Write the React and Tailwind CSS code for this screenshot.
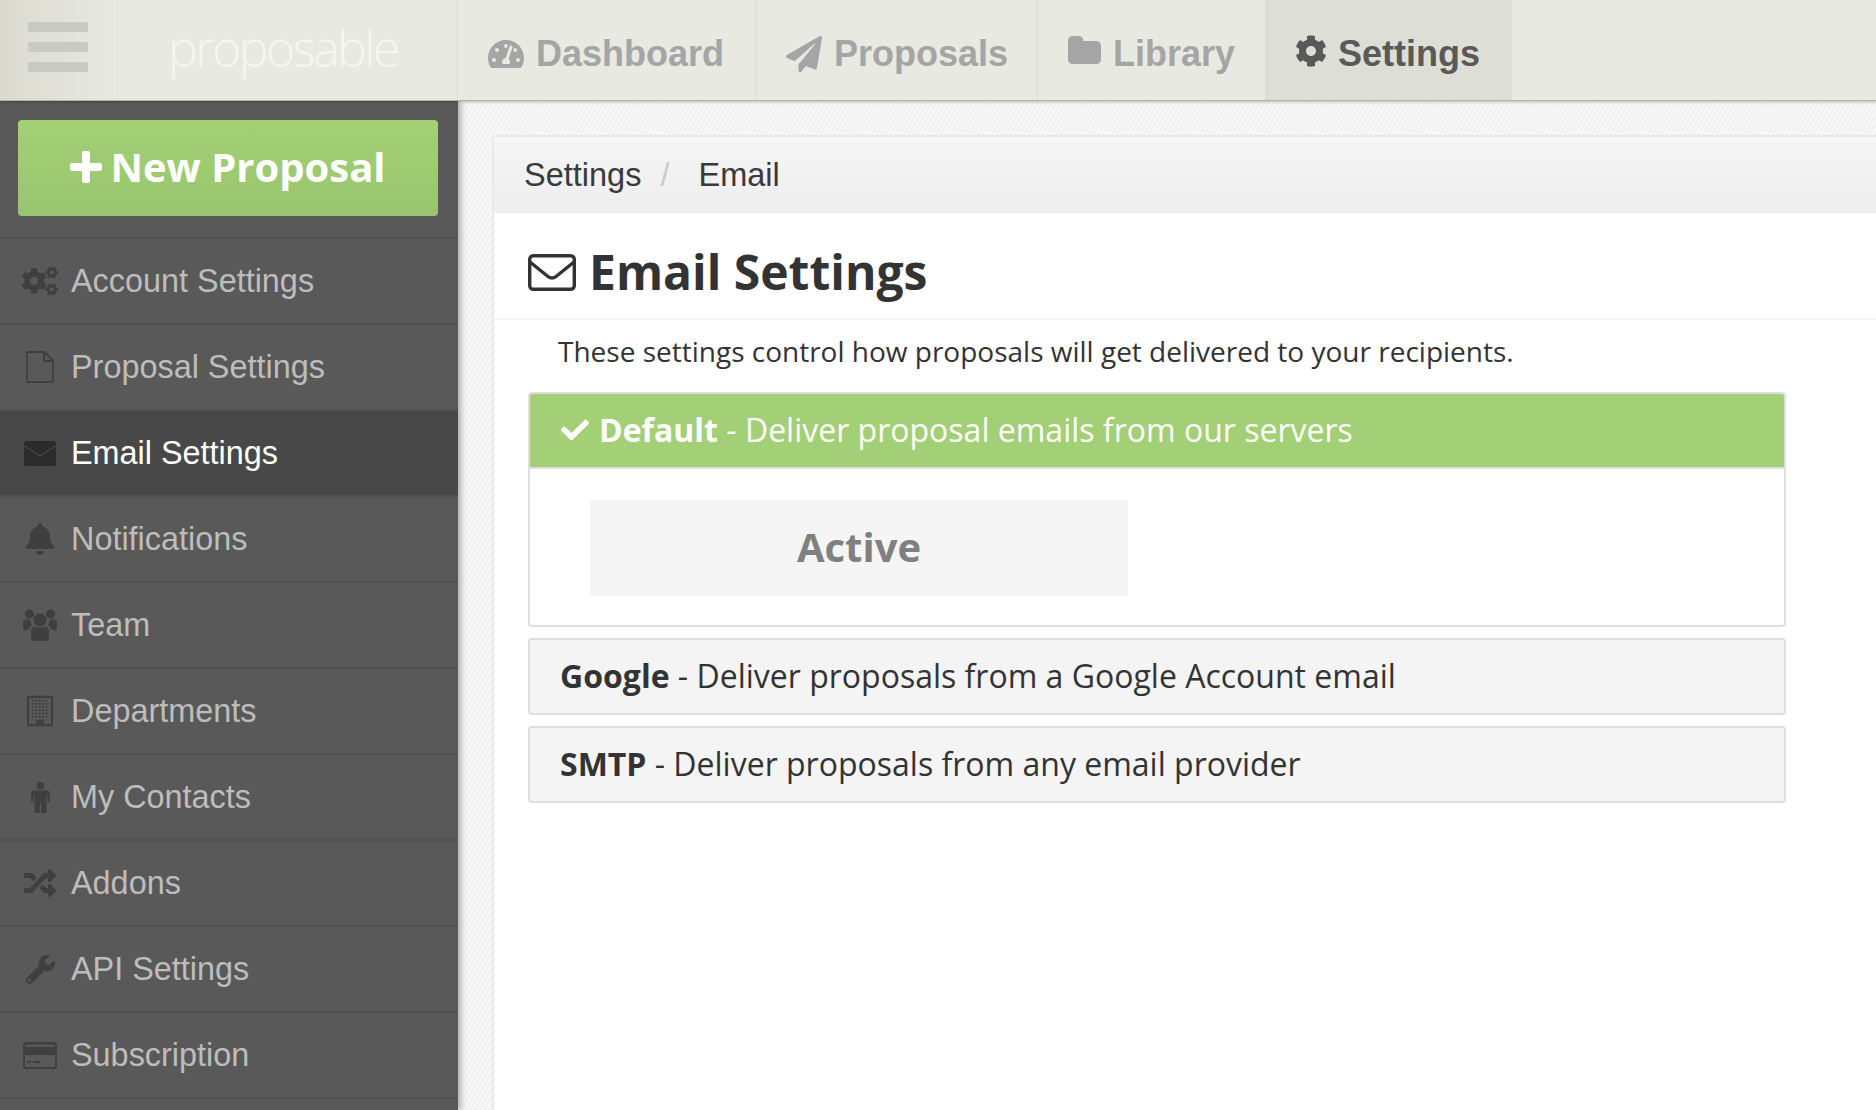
import { FaTachometerAlt, FaPaperPlane, FaCog, FaCogs, FaBell, FaRandom, FaWrench, FaCheck } from 'react-icons/fa'

function BuildingIcon() {
  const dots = []
  for (let r = 0; r < 6; r++) {
    for (let c = 0; c < 5; c++) {
      dots.push(<rect key={`${r}-${c}`} x={4.5 + c * 3.2} y={3.5 + r * 3} width="1.7" height="1.6" />)
    }
  }
  return (
    <svg viewBox="0 0 24 28" className="w-[26px] h-[32px]" fill="currentColor">
      <path fillRule="evenodd" d="M1.5 0h21A1.5 1.5 0 0 1 24 1.5v25a1.5 1.5 0 0 1-1.5 1.5h-21A1.5 1.5 0 0 1 0 26.5v-25A1.5 1.5 0 0 1 1.5 0zM2 2v24h6v-4h8v4h6V2z" />
      {dots}
    </svg>
  )
}

function CardIcon() {
  return (
    <svg viewBox="0 0 34 27" className="w-[34px] h-[27px]" fill="currentColor">
      <path fillRule="evenodd" d="M3 0h28a3 3 0 0 1 3 3v21a3 3 0 0 1-3 3H3a3 3 0 0 1-3-3V3a3 3 0 0 1 3-3zM2 13v11a1 1 0 0 0 1 1h28a1 1 0 0 0 1-1V13zM2 2.5V5h30V2.5z" />
      <rect x="4" y="19" width="4" height="2" />
      <rect x="10" y="19" width="7" height="2" />
    </svg>
  )
}

function FolderIcon() {
  return (
    <svg viewBox="0 0 1664 1408" className="mb-[7px] w-[33px] h-[28px]" fill="currentColor">
      <path d="M1664 480v704q0 92-66 158t-158 66H224q-92 0-158-66t-66-158V224q0-92 66-158t158-66h320q92 0 158 66t66 158v32h672q92 0 158 66t66 158z" />
    </svg>
  )
}

function FileIcon() {
  return (
    <svg viewBox="0 0 28 32" className="w-[28px] h-[32px]" fill="none" stroke="currentColor" strokeWidth="1.8">
      <path d="M1.5 1h17L27 9.5V29.5a1.5 1.5 0 0 1-1.5 1.5h-24A1 1 0 0 1 1 30V2a1 1 0 0 1 .5-1z" />
      <path d="M18 1v9h9" />
    </svg>
  )
}

function MailFilled({ cut }) {
  return (
    <svg viewBox="0 0 32 25" className="w-[32px] h-[25px]">
      <rect width="32" height="25" rx="2.5" fill="currentColor" />
      <path d="M0 4.5 L16 15 L32 4.5" fill="none" stroke={cut} strokeWidth="1.2" />
    </svg>
  )
}

function MailOutline() {
  return (
    <svg viewBox="0 0 48 37" className="ml-[1px] w-[48px] h-[37px]" fill="none" stroke="currentColor" strokeWidth="3.4" strokeLinejoin="round">
      <rect x="1.7" y="1.7" width="44.6" height="33.6" rx="3.5" />
      <path d="M2 8 L20 22.5 Q24 25.5 28 22.5 L46 8" />
    </svg>
  )
}

function PlusIcon() {
  return (
    <svg viewBox="0 0 32 32" className="w-[32px] h-[32px]" fill="currentColor">
      <rect x="12" y="0" width="8" height="32" rx="2" />
      <rect x="0" y="12" width="32" height="8" rx="2" />
    </svg>
  )
}

function TeamIcon() {
  return (
    <svg viewBox="0 0 34 32" className="w-[34px] h-[32px]" fill="currentColor">
      <circle cx="6.5" cy="5" r="4.5" />
      <circle cx="27.5" cy="5" r="4.5" />
      <circle cx="17" cy="11" r="6.5" />
      <path d="M0 13.5q0-2.500 3-3h4q.5 3 2.500 6-3 .5-4.500 4.500H2q-2 0-2-2zM34 13.500q0-2.500-3-3h-4q-.5 3-2.500 6 3 .5 4.500 4.500h3q2 0 2-2z" />
      <path d="M8 23q0-4.500 4-5.500 5 3 10 0 4 1 4 5.500v5.500q0 3.500-3.500 3.500h-11Q8 32 8 28.500z" />
    </svg>
  )
}

function MaleIcon() {
  return (
    <svg viewBox="0 0 19 31" className="w-[19px] h-[31px]" fill="currentColor">
      <circle cx="9.5" cy="3.7" r="3.7" />
      <path d="M3 8.5h13a3 3 0 0 1 3 3v7.500a1.250 1.250 0 0 1-2.500 0v-6.500h-1v17a1.500 1.500 0 0 1-5.500.5v-9h-1v9a1.500 1.500 0 0 1-5.500-.5v-17h-1v6.500a1.250 1.250 0 0 1-2.500 0v-7.500a3 3 0 0 1 3-3z" />
    </svg>
  )
}

const navItems = [
  { label: 'Dashboard', icon: <FaTachometerAlt size={36} />, width: 'w-[298px]' },
  { label: 'Proposals', icon: <FaPaperPlane size={36} />, width: 'w-[282px]' },
  { label: 'Library', icon: <FolderIcon />, width: 'w-[228px]' },
]

const sideItems = [
  { label: 'Account Settings', icon: <FaCogs size={36} /> },
  { label: 'Proposal Settings', icon: <FileIcon /> },
  { label: 'Email Settings', icon: <MailFilled cut="#484848" />, active: true },
  { label: 'Notifications', icon: <FaBell size={32} /> },
  { label: 'Team', icon: <TeamIcon /> },
  { label: 'Departments', icon: <BuildingIcon /> },
  { label: 'My Contacts', icon: <MaleIcon /> },
  { label: 'Addons', icon: <FaRandom size={32} /> },
  { label: 'API Settings', icon: <FaWrench size={29} /> },
  { label: 'Subscription', icon: <CardIcon /> },
]

function TopBar() {
  return (
    <header className="relative z-20 flex h-[101px] shrink-0 border-b border-[#b4b5a6] bg-[#e8e9e1] shadow-[0_1px_3px_rgba(0,0,0,0.25)] font-['Liberation_Sans',sans-serif]">
      <div className="flex w-[118px] flex-col gap-[10px] border-r border-[#dddfd5] bg-gradient-to-r from-[#dadad0] to-[#e8e9e1] py-[22px] pl-[28px]">
        <span className="h-[10px] w-[60px] rounded-[2px] bg-[#c9cac1]" />
        <span className="h-[10px] w-[60px] rounded-[2px] bg-[#c9cac1]" />
        <span className="h-[10px] w-[60px] rounded-[2px] bg-[#c9cac1]" />
      </div>
      <div className="flex w-[340px] items-center border-r border-[#dddfd5] pb-[4px] pl-[50px] font-['Open_Sans',sans-serif] text-[50px] font-light tracking-[-2.6px] text-[#f5f6f0]">
        proposable
      </div>
      {navItems.map((item) => (
        <div key={item.label} className={`flex items-center gap-[12px] border-r border-[#dddfd5] pl-[30px] pt-[7px] text-[36px] font-bold text-[#a5a5a5] ${item.width}`}>
          {item.icon}
          <span>{item.label}</span>
        </div>
      ))}
      <div className="flex w-[246px] items-center gap-[11px] bg-[#dddfd6] pl-[29px] pt-[7px] text-[36px] font-bold text-[#595959]">
        <FaCog size={32} className="mb-[5px]" />
        <span>Settings</span>
      </div>
    </header>
  )
}

function Sidebar() {
  return (
    <aside className="relative z-10 w-[458px] shrink-0 bg-[#595959] font-['Liberation_Sans',sans-serif] shadow-[3px_0_6px_rgba(0,0,0,0.3)]">
      <div className="h-[136px] px-[18px] pt-[19px]">
        <button className="flex h-[96px] w-[420px] items-center justify-center gap-[8px] rounded-[4px] bg-gradient-to-b from-[#a3d175] to-[#99c46f] pb-[2px] font-['Open_Sans',sans-serif] text-[40px] font-bold text-white">
          <PlusIcon />
          New Proposal
        </button>
      </div>
      {sideItems.map((item) => (
        <div
          key={item.label}
          className={`flex h-[86px] items-center border-t-2 border-[#525252] ${item.active ? 'bg-[#484848] text-white' : 'text-[#bdbdbd]'}`}
        >
          <span className={`flex w-[71px] shrink-0 justify-center pl-[9px] ${item.active ? 'text-[#2b2b2b]' : 'text-[#3f3f3f]'}`}>{item.icon}</span>
          <span className="text-[32.4px]">{item.label}</span>
        </div>
      ))}
      <div className="border-t-2 border-[#525252]" />
    </aside>
  )
}

function MethodRow({ title, text }) {
  return (
    <div className="flex h-[77px] items-center rounded-[4px] border-2 border-[#dedede] bg-[#f4f4f4] pb-[2px] pl-[30px] text-[32px] text-[#333333]">
      <span><b className="font-bold">{title}</b> - {text}</span>
    </div>
  )
}

function Content() {
  return (
    <main className="flex-1 overflow-hidden bg-[#f6f6f6] bg-[repeating-linear-gradient(120deg,#f8f8f8_0px,#f8f8f8_2px,#f1f1f1_2px,#f1f1f1_4px)] pl-[34px] pt-[34px]">
      <div className="h-full w-[1500px] rounded-tl-[4px] border-l-2 border-t-2 border-[#e9eae2] bg-white font-['Open_Sans',sans-serif]">
        <div className="flex h-[76px] items-center bg-gradient-to-b from-[#f5f5f5] to-[#eeeeee] pl-[30px] font-['Liberation_Sans',sans-serif] text-[32.5px] text-[#3a3a3a]">
          <span>Settings</span>
          <span className="ml-[19px] mr-[29px] text-[#cccccc]">/</span>
          <span>Email</span>
        </div>
        <div className="flex h-[107px] items-center border-b-2 border-[#f4f4f4] pl-[33px] pt-[13px] text-[#333333]">
          <MailOutline />
          <h1 className="ml-[13px] text-[48px] font-bold">Email Settings</h1>
        </div>
        <p className="pl-[64px] pt-[12px] text-[28px] leading-[38px] text-[#333333]">These settings control how proposals will get delivered to your recipients.</p>
        <div className="mt-[22px] flex w-[1292px] flex-col gap-[11px] pl-[34px]">
          <div className="rounded-[4px] border-2 border-[#dedede] bg-white">
            <div className="flex h-[75px] items-center gap-[10px] rounded-t-[2px] border-b-2 border-[#dedede] bg-[#a3d076] pb-[2px] pl-[31px] text-[32px] text-white">
              <FaCheck size={28} />
              <span><b className="font-bold">Default</b> - Deliver proposal emails from our servers</span>
            </div>
            <div className="px-[60px] pb-[29px] pt-[31px]">
              <div className="flex h-[96px] w-[538px] items-center justify-center rounded-[4px] bg-[#f5f5f5] pb-[2px] text-[40px] font-bold text-[#808080]">Active</div>
            </div>
          </div>
          <MethodRow title="Google" text="Deliver proposals from a Google Account email" />
          <MethodRow title="SMTP" text="Deliver proposals from any email provider" />
        </div>
      </div>
    </main>
  )
}

export default function App() {
  return (
    <div className="flex h-[1110px] w-[1876px] flex-col overflow-hidden">
      <TopBar />
      <div className="flex min-h-0 flex-1">
        <Sidebar />
        <Content />
      </div>
    </div>
  )
}
